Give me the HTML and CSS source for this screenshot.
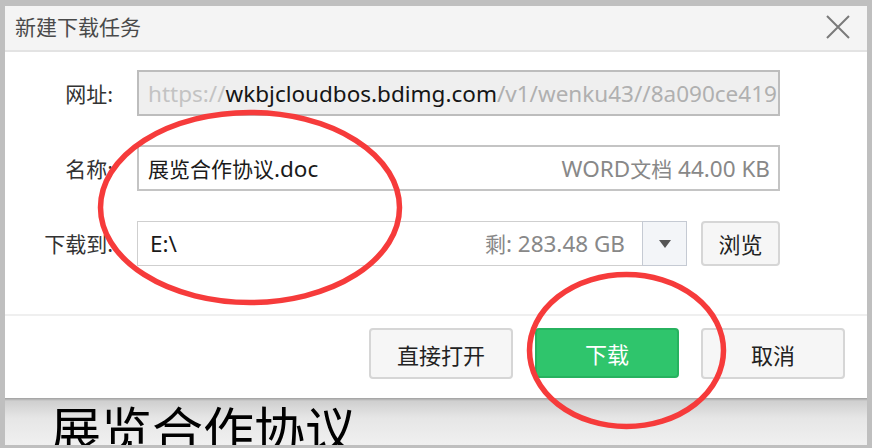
FILE: index.html
```html
<!DOCTYPE html>
<html lang="zh-CN">
<head>
<meta charset="utf-8">
<title>新建下载任务</title>
<link rel="stylesheet" href="styles.css">
</head>
<body>
<div class="frame">
  <div class="dialog">
    <div class="titlebar">
      <span class="title">新建下载任务</span>
      <svg class="close" width="26" height="26" viewBox="0 0 26 26"><path d="M2 2L24 24M24 2L2 24" stroke="#7a7a7a" stroke-width="2" fill="none"/></svg>
    </div>
    <div class="body">
      <div class="row">
        <label class="label">网址:</label>
        <div class="field field-url"><span class="muted">https://</span><span class="strong">wkbjcloudbos.bdimg.com</span><span class="muted2">/v1/wenku43//8a090ce419</span></div>
      </div>
      <div class="row">
        <label class="label">名称:</label>
        <div class="field field-name"><span class="name"><span class="cjk">展览合作协议</span>.doc</span><span class="meta">WORD<span class="cjk-meta">文档</span> 44.00 KB</span></div>
      </div>
      <div class="row">
        <label class="label">下载到:</label>
        <div class="path-group">
          <div class="field field-path"><span class="name">E:\</span><span class="meta"><span class="cjk-meta">剩</span>: 283.48 GB</span></div>
          <div class="dropdown"><span class="tri"></span></div>
        </div>
        <button class="btn btn-browse">浏览</button>
      </div>
    </div>
    <div class="footer">
      <button class="btn btn-foot">直接打开</button>
      <button class="btn btn-foot btn-green">下载</button>
      <button class="btn btn-foot">取消</button>
    </div>
  </div>
  <div class="docbg"><span class="doctitle">展览合作协议</span></div>
</div>
<svg class="marks" width="872" height="448" viewBox="0 0 872 448">
  <ellipse cx="250" cy="207.5" rx="149.5" ry="95" fill="none" stroke="#f63b3b" stroke-width="5.5"/>
  <ellipse cx="626.5" cy="350.5" rx="97" ry="76" fill="none" stroke="#f63b3b" stroke-width="5.5"/>
</svg>
</body>
</html>
```
FILE: styles.css
```css
* { box-sizing: border-box; }
html, body { margin: 0; padding: 0; }
body {
  width: 872px;
  height: 448px;
  overflow: hidden;
  background: #bfbfbf;
  font-family: "Noto Sans", "Noto Sans CJK SC", sans-serif;
  position: relative;
}
.frame {
  padding: 6px 5px 3px 5px;
  height: 448px;
  display: flex;
  flex-direction: column;
}
.dialog {
  width: 862px;
  height: 392px;
  background: #fff;
  display: flex;
  flex-direction: column;
}
.titlebar {
  height: 46px;
  background: #f4f4f4;
  border-bottom: 2px solid #e3e3e3;
  display: flex;
  align-items: center;
  justify-content: space-between;
  padding: 0 16px 4px 10px;
}
.title {
  font-family: "Noto Sans CJK SC", sans-serif;
  font-size: 21px;
  color: #4a4a4a;
}
.close { display: block; margin-top: 2px; }
.body {
  padding: 18px 0 48px 0;
  display: flex;
  flex-direction: column;
  gap: 29px;
  border-bottom: 2px solid #efefef;
}
.row {
  display: flex;
  align-items: center;
  height: 46px;
}
.label {
  width: 108px;
  text-align: right;
  font-family: "Noto Sans CJK SC", sans-serif;
  font-size: 21px;
  color: #333;
  margin-right: 24px;
}
.field {
  height: 46px;
  border: 2px solid #c4c4c4;
  display: flex;
  align-items: center;
  padding: 0 8px 0 9px;
  font-size: 22.5px;
  white-space: nowrap;
  overflow: hidden;
}
.field-url {
  width: 643px;
  background: #efefef;
  border-color: #bdbdbd;
}
.muted { color: #c3c3c3; }
.strong { color: #151515; }
.muted2 { color: #b0b0b0; }
.field-name {
  width: 643px;
  justify-content: space-between;
  background: #fff;
}
.name { color: #1a1a1a; font-family: "Noto Sans", "Noto Sans CJK SC", sans-serif; }
.cjk { font-family: "Noto Sans CJK SC", sans-serif; font-size: 21px; }
.cjk-meta { font-family: "Noto Sans CJK SC", sans-serif; font-size: 21px; }
.meta { color: #888; font-size: 22.5px; }
.path-group {
  display: flex;
  width: 550px;
  height: 45px;
}
.field-path {
  width: 505px;
  height: 45px;
  justify-content: space-between;
  border: 1px solid #cfcfcf;
  border-right: none;
  padding: 0 17px 0 12px;
}
.dropdown {
  width: 45px;
  height: 45px;
  background: #f3f5f8;
  border: 1px solid #c5cad3;
  display: flex;
  align-items: center;
  justify-content: center;
}
.tri {
  width: 0; height: 0;
  border-left: 6px solid transparent;
  border-right: 6px solid transparent;
  border-top: 8px solid #555;
  margin-top: 2px;
}
.btn {
  font-family: "Noto Sans CJK SC", sans-serif;
  font-size: 22px;
  color: #222;
  background: #f6f6f6;
  border: 2px solid #d6d6d6;
  border-radius: 4px;
  padding: 0;
  cursor: pointer;
}
.btn-browse {
  width: 79px;
  height: 45px;
  margin-left: 14px;
}
.footer {
  flex: 1;
  display: flex;
  justify-content: flex-end;
  align-items: flex-start;
  gap: 22px;
  padding: 12px 22px 0 0;
}
.btn-foot {
  width: 144px;
  height: 51px;
}
.btn-green {
  background: #2fc56c;
  border-color: #27b25f;
  color: #fff;
  height: 50px;
}
.docbg {
  flex: 1;
  overflow: hidden;
  background: linear-gradient(#9f9f9f 0px, #cfcfcf 3px, #e6e6e6 20px, #f0f0f0 47px);
  padding-left: 45px;
}
.doctitle {
  display: block;
  font-family: "Noto Sans CJK SC", sans-serif;
  font-size: 51px;
  line-height: 1;
  color: #000;
  margin-top: 5px;
  white-space: nowrap;
}
.marks {
  position: absolute;
  left: 0;
  top: 0;
  pointer-events: none;
}
```
